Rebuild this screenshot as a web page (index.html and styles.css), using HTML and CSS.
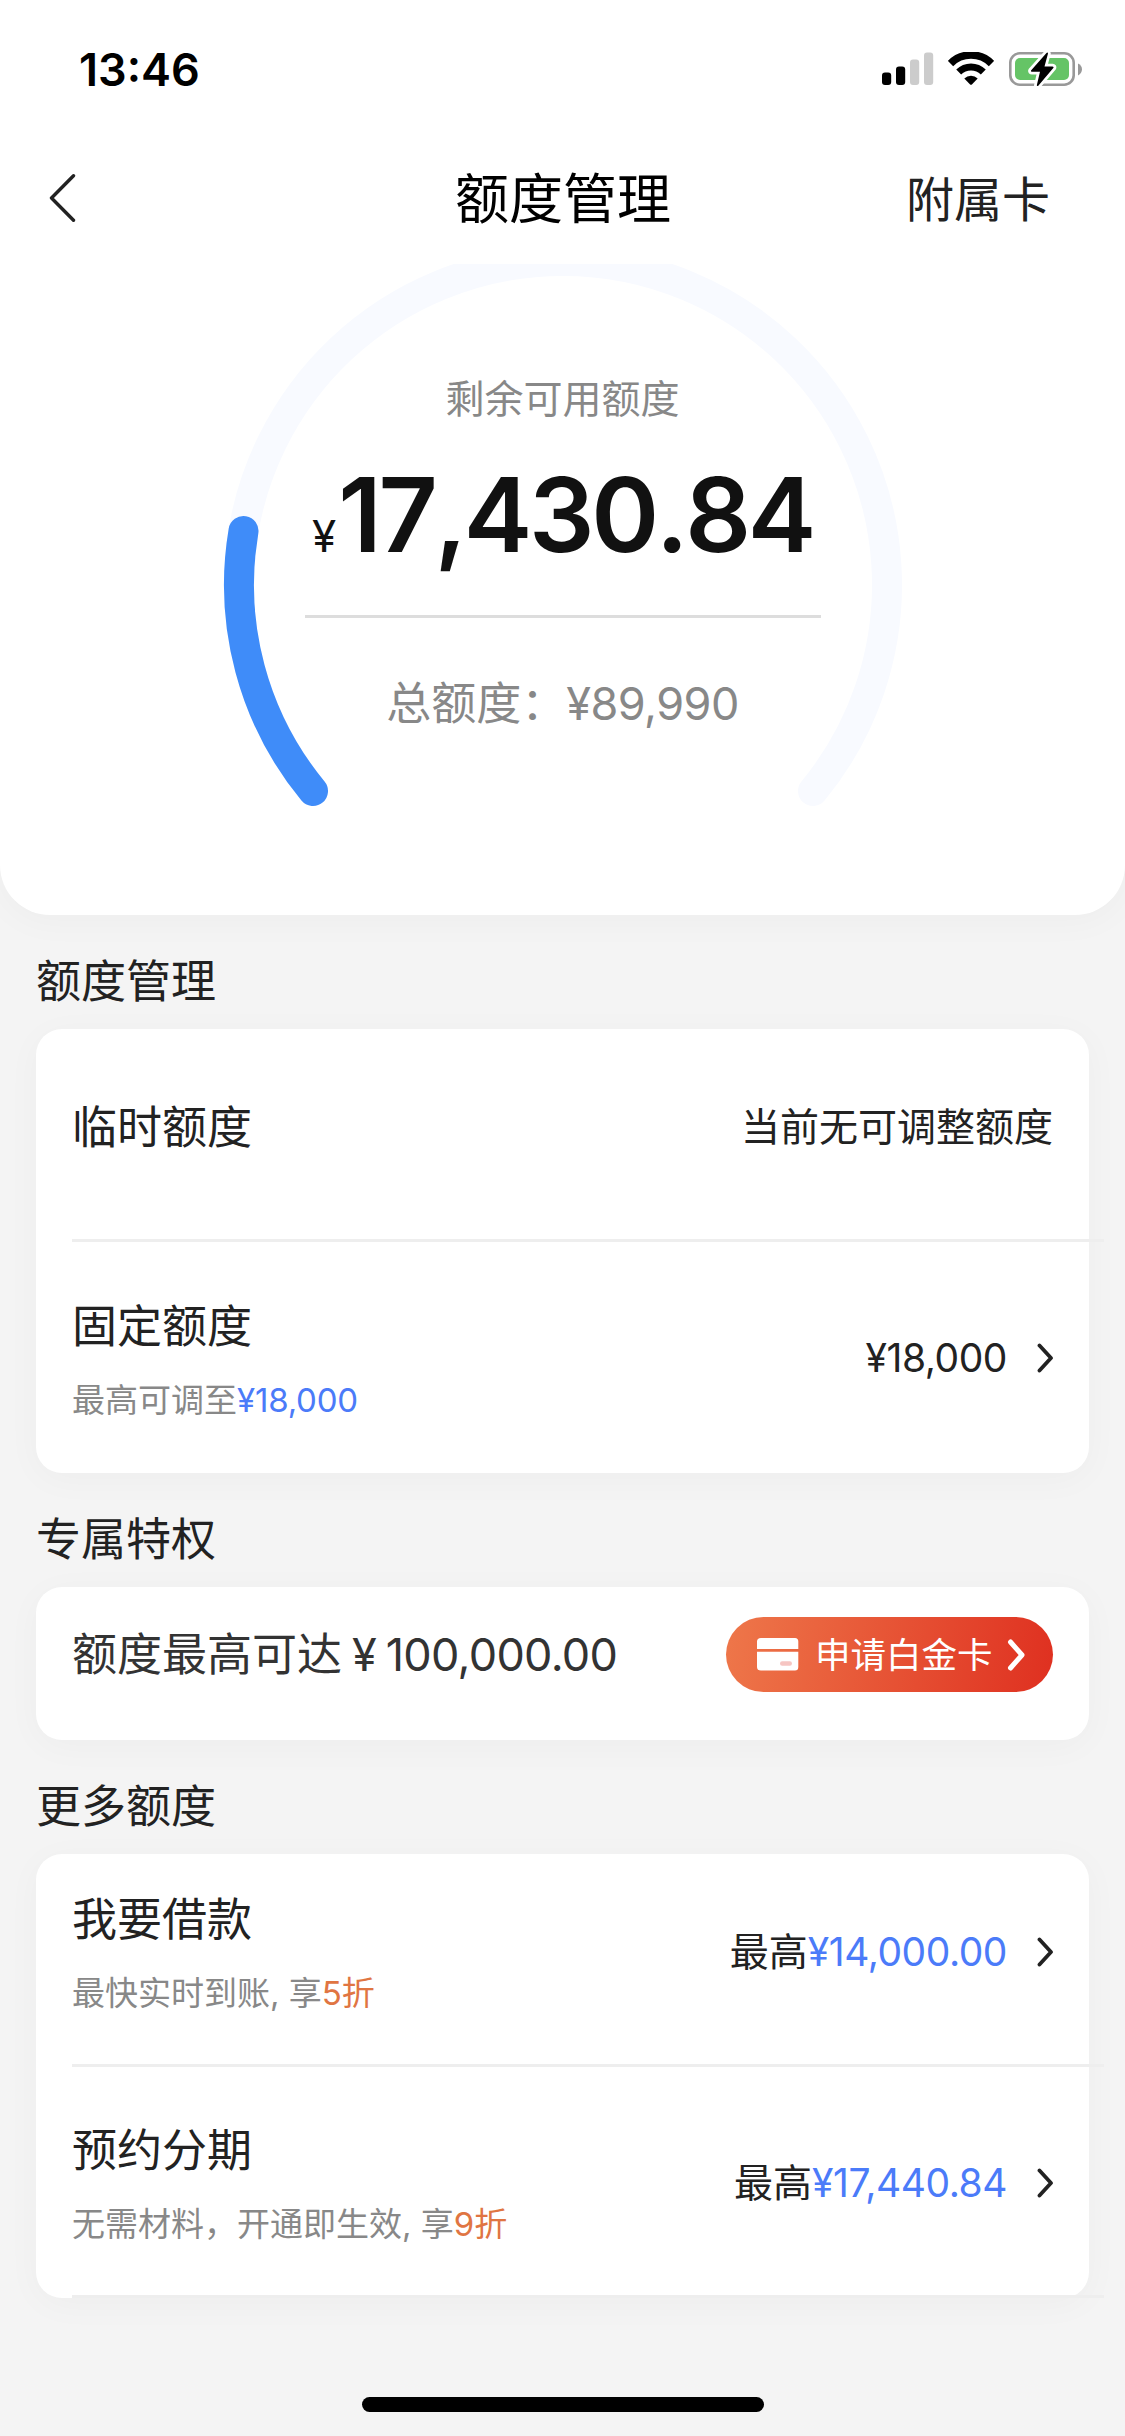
FILE: index.html
```html
<!DOCTYPE html>
<html lang="zh-CN">
<head>
<meta charset="utf-8">
<title>额度管理</title>
<link rel="stylesheet" href="styles.css">
</head>
<body>
<div class="page">
  <header class="top">
    <div class="status">
      <span class="time">13:46</span>
      <div class="status-icons">
        <svg class="signal" width="52" height="34" viewBox="0 0 52 34">
          <rect x="0" y="20.500" width="9.200" height="12.500" rx="3"/>
          <rect x="14" y="14.500" width="9.200" height="18.500" rx="3"/>
          <rect x="28" y="7.500" width="9.200" height="25.500" rx="3" fill="#ccc"/>
          <rect x="42" y="0.500" width="9.200" height="32.500" rx="3" fill="#ccc"/>
        </svg>
        <svg class="wifi" width="46" height="34" viewBox="0 0 46 34">
          <path d="M2.500 11.500 A29 29 0 0 1 43.500 11.500" fill="none" stroke="#000" stroke-width="7.600"/>
          <path d="M10.700 20 A17.500 17.500 0 0 1 35.300 20" fill="none" stroke="#000" stroke-width="7"/>
          <path d="M16.300 26.500 A9.600 9.600 0 0 1 29.700 26.500 L23.900 32.400 Q23 33.200 22.100 32.400Z"/>
        </svg>
        <svg class="battery" width="74" height="38" viewBox="0 0 74 38">
          <rect x="1.300" y="3.300" width="63.400" height="31.400" rx="9.500" fill="none" stroke="#999" stroke-width="2.600"/>
          <rect x="6" y="8" width="54" height="22" rx="5" fill="#65c466"/>
          <path d="M69 13.500 Q73 15.500 73 19.300 T69 25.500Z" fill="#999"/>
          <path d="M37.500 3 L22 20.500 Q21.500 21.700 23 21.700 L31 21.700 L27.800 35.300 Q28 36.600 29.300 35.700 L44.500 17.800 Q45 16.500 43.500 16.400 L35.500 16.400 L39 3.500 Q38.800 2 37.500 3Z" stroke="#fff" stroke-width="5.500" paint-order="stroke"/>
        </svg>
      </div>
    </div>
    <nav class="nav">
      <svg class="back" width="27" height="48" viewBox="0 0 27 48"><path d="M24.500 1.800 L2.500 24 L24.500 46.200" fill="none" stroke="#222" stroke-width="3.400" stroke-linecap="round" stroke-linejoin="round"/></svg>
      <h1 class="title">额度管理</h1>
      <a class="action">附属卡</a>
    </nav>
    <section class="hero">
      <svg class="gauge" width="1125" height="560" viewBox="0 0 1125 560">
        <g fill="none" stroke-width="30" stroke-linecap="round">
          <path d="M313 527 A324 324 0 1 1 813 527" stroke="#f8faff"/>
          <path d="M313 527 A324 324 0 0 1 243.500 267" stroke="#3f8cf9"/>
        </g>
      </svg>
      <div class="hero-text">
        <p class="hero-label">剩余可用额度</p>
        <p class="hero-amount"><span class="hero-yen">¥</span><span class="hero-number">17,430.84</span></p>
        <div class="hero-line"></div>
        <p class="hero-total">总额度：<span class="total-num">¥89,990</span></p>
      </div>
    </section>
  </header>

  <main class="content">
    <h2 class="heading">额度管理</h2>
    <div class="card">
      <div class="row row-single">
        <div class="info"><div class="name">临时额度</div></div>
        <div class="value">当前无可调整额度</div>
      </div>
      <div class="divider"></div>
      <div class="row row-next">
        <div class="info">
          <div class="name">固定额度</div>
          <div class="note">最高可调至<span class="blue note-num">¥18,000</span></div>
        </div>
        <div class="value"><span class="num">¥18,000</span><svg class="chev" width="17" height="30" viewBox="0 0 17 30"><path d="M2.500 2.500 L14 15 L2.500 27.500"/></svg></div>
      </div>
    </div>

    <h2 class="heading">专属特权</h2>
    <div class="card">
      <div class="promo">
        <div class="promo-text">额度最高可达<span class="promo-yen">¥</span><span class="promo-num">100,000.00</span></div>
        <a class="apply">
          <svg width="42" height="33" viewBox="0 0 42 33"><path fill="#fff" d="M4 0H38Q41.300 0 41.300 3.500V11H0V3.500Q0 0 4 0ZM0 13.800H41.300V29Q41.300 32.500 38 32.500H4Q0 32.500 0 29Z"/><rect x="23" y="23.300" width="12" height="4.400" rx="2.200" fill="#f6c5c2"/></svg>
          <span class="apply-text">申请白金卡</span>
          <svg class="chev chev-white" width="19" height="32" viewBox="0 0 19 32"><path d="M3.500 3 L15 16 L3.500 29"/></svg>
        </a>
      </div>
    </div>

    <h2 class="heading">更多额度</h2>
    <div class="card">
      <div class="row row-loan">
        <div class="info">
          <div class="name">我要借款</div>
          <div class="note">最快实时到账, 享<span class="orange">5折</span></div>
        </div>
        <div class="value">最高<span class="num blue">¥14,000.00</span><svg class="chev" width="17" height="30" viewBox="0 0 17 30"><path d="M2.500 2.500 L14 15 L2.500 27.500"/></svg></div>
      </div>
      <div class="divider"></div>
      <div class="row row-next row-last">
        <div class="info">
          <div class="name">预约分期</div>
          <div class="note">无需材料，开通即生效, 享<span class="orange">9折</span></div>
        </div>
        <div class="value">最高<span class="num blue">¥17,440.84</span><svg class="chev" width="17" height="30" viewBox="0 0 17 30"><path d="M2.500 2.500 L14 15 L2.500 27.500"/></svg></div>
      </div>
      <div class="divider"></div>
    </div>
  </main>
  <div class="home-bar"></div>
</div>
</body>
</html>
```
FILE: styles.css
```css
* { box-sizing: border-box; margin: 0; padding: 0; }

body {
  background: #f4f4f4;
  color: #222;
  font-family: Inter, "Noto Sans CJK SC", sans-serif;
  font-weight: 400;
}

svg { display: block; flex: none; }

.page {
  width: 1125px;
  height: 2436px;
  display: flex;
  flex-direction: column;
  overflow: hidden;
}

.top {
  height: 915px;
  background: #fff;
  border-radius: 0 0 50px 50px;
  box-shadow: 0 6px 36px rgba(0, 0, 0, 0.03);
}

.status {
  height: 132px;
  padding: 3px 42px 0 79px;
  display: flex;
  align-items: center;
  justify-content: space-between;
}

.time {
  font-size: 45px;
  font-weight: 600;
  color: #000;
  line-height: 60px;
  margin-top: 4px;
}

.status-icons { display: flex; align-items: center; padding-top: 2px; }
.wifi { margin-left: 14px; }
.battery { margin-left: 15px; }

.nav {
  height: 132px;
  padding: 3px 75px 0 49px;
  display: grid;
  grid-template-columns: 1fr auto 1fr;
  align-items: center;
}

.back { margin-top: -3px; }

.title {
  font-size: 54px;
  font-weight: 400;
  color: #000;
  line-height: 72px;
  padding-left: 27px;
}

.action {
  justify-self: end;
  font-size: 48px;
  line-height: 64px;
}

.hero {
  position: relative;
  height: 651px;
  overflow: hidden;
}

.gauge { position: absolute; left: 0; top: 0; }

.hero-text {
  position: relative;
  display: flex;
  flex-direction: column;
  align-items: center;
  padding-top: 105px;
}

.hero-label {
  font-size: 39px;
  line-height: 60px;
  color: #888;
}

.hero-amount {
  height: 120px;
  margin-top: 26px;
  line-height: 120px;
  color: #111;
  white-space: nowrap;
}

.hero-yen { margin-right: 2px; font-size: 44px; }

.hero-number {
  font-size: 103px;
  font-weight: 600;
  font-kerning: none;
  letter-spacing: -3.4px;
}

.hero-line {
  width: 516px;
  height: 3px;
  margin-top: 40px;
  background: #ddd;
}

.hero-total {
  margin-top: 56px;
  font-size: 45px;
  line-height: 60px;
  color: #888;
}

.total-num { letter-spacing: -0.5px; }

.content { padding: 0 36px; }

.heading {
  padding: 37px 0 17px;
  font-size: 45px;
  font-weight: 400;
  line-height: 60px;
}

.card {
  background: #fff;
  border-radius: 26px;
  box-shadow: 0 6px 36px rgba(0, 0, 0, 0.03);
}

.row {
  height: 211px;
  padding: 0 36px 17px;
  display: flex;
  align-items: center;
  justify-content: space-between;
}

.row-single { height: 210px; padding-bottom: 15px; }
.row-next { height: 231px; padding-top: 18px; }
.row-loan { height: 210px; padding-bottom: 15px; }
.row-last { height: 228px; padding-top: 20px; }

.name { padding-top: 2px; font-size: 45px; line-height: 60px; }

.note {
  margin-top: 21px;
  font-size: 33px;
  line-height: 44px;
  color: #888;
}

.note-num { letter-spacing: -0.2px; }

.value {
  display: flex;
  align-items: center;
  font-size: 39px;
  line-height: 54px;
}

.num { letter-spacing: -0.45px; }

.blue { color: #4b7bf9; }
.orange { color: #e07542; }

.chev {
  margin-left: 30px;
  margin-right: -1px;
  fill: none;
  stroke: #222;
  stroke-width: 3.8px;
  stroke-linecap: round;
  stroke-linejoin: round;
}

.divider {
  position: relative;
  height: 3px;
  margin: 0 -15px 0 36px;
  background: #eee;
}

.promo {
  height: 153px;
  padding: 0 36px 18px;
  display: flex;
  align-items: center;
  justify-content: space-between;
}

.promo-text { font-size: 45px; line-height: 60px; color: #333; padding-top: 1px; }
.promo-yen { margin: 0 9px 0 10px; }
.promo-num { letter-spacing: -0.7px; }

.apply {
  width: 327px;
  height: 75px;
  padding: 0 27px 0 31px;
  display: flex;
  align-items: center;
  border-radius: 38px;
  background: linear-gradient(100deg, #ee774a, #df3020);
  color: #fff;
}

.apply-text { margin-left: 16px; padding-top: 2px; font-size: 35.5px; line-height: 50px; }

.chev-white {
  margin-left: 14px;
  margin-right: 0;
  stroke: #fff;
  stroke-width: 5px;
}

.home-bar {
  width: 402px;
  height: 15px;
  margin: auto auto 24px;
  border-radius: 8px;
  background: #000;
}
```
